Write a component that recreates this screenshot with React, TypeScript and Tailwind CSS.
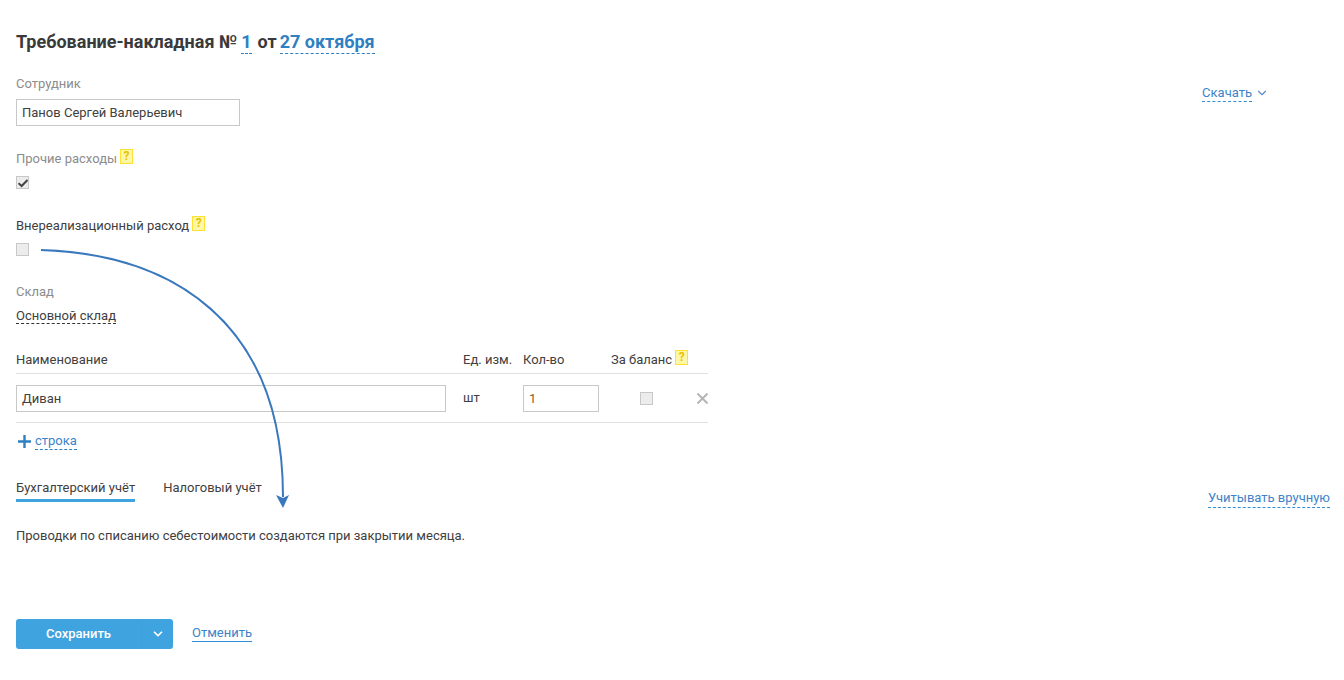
import { ChevronDown } from "lucide-react";

function Hint() {
  return (
    <span className="ml-[3px] inline-flex h-[15px] w-[13px] -translate-y-[3px] items-center justify-center border border-[#ffe033] bg-[#fff7a8] text-[12px] font-bold leading-none text-[#e6c200]">
      ?
    </span>
  );
}

function Checkbox({ checked = false }: { checked?: boolean }) {
  return (
    <span className="flex h-[13px] w-[13px] items-center justify-center border border-[#c8c8c8] bg-[#ececec]">
      {checked && (
        <svg className="h-[10px] w-[10px]" viewBox="0 0 10 10" fill="none" stroke="#444" strokeWidth={2}>
          <path d="M0.5 5.2 3.6 8 9.5 2" />
        </svg>
      )}
    </span>
  );
}

function Arrow() {
  return (
    <svg className="pointer-events-none absolute left-0 top-0" width="320" height="520" fill="none">
      <path d="M41 250C170 254 283 320 283 497" stroke="#3a78bd" strokeWidth={2} />
      <path d="M276 495 283 498 289 495 283 508Z" fill="#3a78bd" />
    </svg>
  );
}

export default function App() {
  return (
    <main className="relative h-[680px] overflow-hidden bg-white px-4 font-['Roboto',sans-serif] text-[13px] leading-[16px] text-[#404040]">
      <Arrow />

      <div className="flex justify-between">
        <div>
          <h1 className="mt-[31px] flex h-[22px] items-center text-[18px] font-bold leading-[22px] text-[#3a3a3a]">
            Требование-накладная №
            <span className="ml-[4px] border-b border-dashed border-[#2f80c2] text-[#2f80c2]">1</span>
            <span className="ml-[6px] mr-[3px]">от</span>
            <span className="border-b border-dashed border-[#2f80c2] text-[#2f80c2]">27 октября</span>
          </h1>

          <div className="mt-[23px] text-[#8c8c8c]">Сотрудник</div>
          <div className="mt-[7px] flex h-[27px] w-[224px] items-center border border-[#c8c8c8] px-[5px]">
            Панов Сергей Валерьевич
          </div>

          <div className="mt-[25px] text-[#8c8c8c]">
            Прочие расходы
            <Hint />
          </div>
          <div className="mt-[9px]">
            <Checkbox checked />
          </div>

          <div className="mt-[29px]">
            Внереализационный расход
            <Hint />
          </div>
          <div className="mt-[9px]">
            <Checkbox />
          </div>

          <div className="mt-[28px] text-[#8c8c8c]">Склад</div>
          <div className="mt-[8px]">
            <span className="border-b border-dashed border-[#333]">Основной склад</span>
          </div>
        </div>

        <div className="mt-[85px] mr-[59px] flex h-[16px] items-center text-[#3d83c9]">
          <span className="border-b border-dashed border-[#2f8fd6]">Скачать</span>
          <ChevronDown className="ml-[3px] h-[14px] w-[14px] text-[#5a8fc4]" />
        </div>
      </div>

      <div className="mt-[28px] w-[692px]">
        <div className="flex h-[22px] items-start border-b border-[#e0e0e0]">
          <div className="w-[447px]">Наименование</div>
          <div className="w-[60px]">Ед. изм.</div>
          <div className="w-[88px]">Кол-во</div>
          <div className="whitespace-nowrap">
            За баланс
            <Hint />
          </div>
        </div>
        <div className="flex h-[49px] items-center border-b border-[#e0e0e0]">
          <div className="flex h-[27px] w-[430px] items-center border border-[#c8c8c8] px-[5px] pt-px">Диван</div>
          <div className="ml-[17px] w-[60px]">шт</div>
          <div className="flex h-[27px] w-[76px] items-center border border-[#c8c8c8] px-[5px] pt-px text-[#8a5a2c]">1</div>
          <div className="ml-[41px]">
            <Checkbox />
          </div>
          <svg className="ml-[44px]" width="11" height="11" viewBox="0 0 11 11" stroke="#b5b5b5" strokeWidth={2}>
            <path d="M0.5 0.5 10.5 10.5M10.5 0.5 0.5 10.5" />
          </svg>
        </div>
      </div>

      <div className="mt-[10px] flex h-[16px] items-center text-[#3d83c9]">
        <svg className="ml-[2px]" width="13" height="13" viewBox="0 0 13 13" stroke="#2f80c2" strokeWidth={2.4}>
          <path d="M6.5 0V13M0 6.5H13" />
        </svg>
        <span className="ml-[4px] border-b border-dashed border-[#2f80c2]">строка</span>
      </div>

      <div className="mt-[31px] flex h-[30px] items-start justify-between">
        <div className="flex gap-[28px]">
          <div className="h-[22px] border-b-[3px] border-[#3fa3df]">Бухгалтерский учёт</div>
          <div>Налоговый учёт</div>
        </div>
        <div className="mt-[10px] mr-[-2px] h-[18px] border-b border-dashed border-[#2f8fd6] text-[#3d83c9]">
          Учитывать вручную
        </div>
      </div>

      <p className="mt-[18px]">Проводки по списанию себестоимости создаются при закрытии месяца.</p>

      <div className="mt-[75px] flex items-center">
        <div className="flex h-[30px] w-[157px] items-center rounded-[3px] bg-[#3fa3df] font-medium text-white">
          <div className="w-[125px] text-center">Сохранить</div>
          <div className="flex h-full flex-1 items-center justify-center border-l border-[#3d9fdb]">
            <ChevronDown className="h-[14px] w-[14px]" strokeWidth={3} />
          </div>
        </div>
        <span className="mb-[2px] ml-[19px] border-b border-[#2f8fd6] text-[#3d83c9]">Отменить</span>
      </div>
    </main>
  );
}
